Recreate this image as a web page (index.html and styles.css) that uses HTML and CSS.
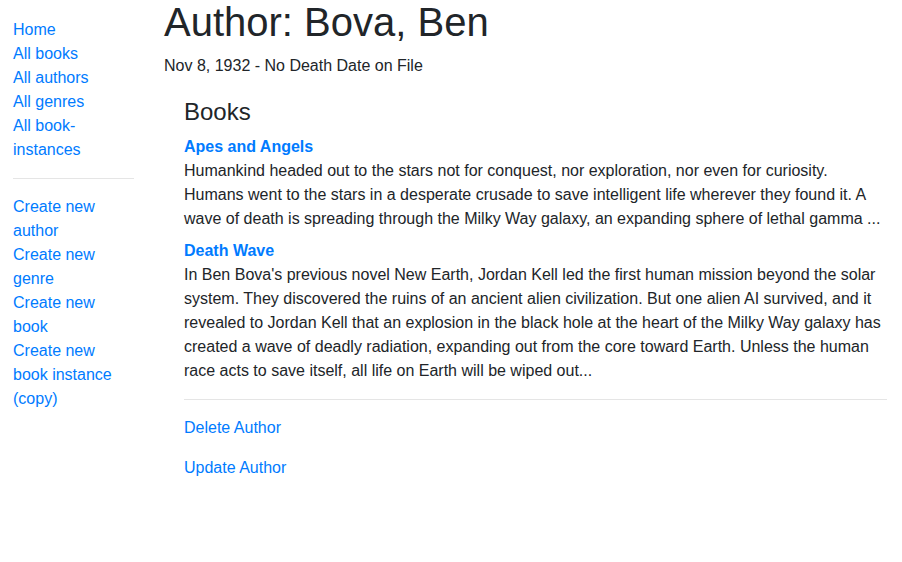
FILE: index.html
```html
<!DOCTYPE html>
<html lang="en">
<head>
<meta charset="utf-8">
<title>Author: Bova, Ben</title>
<link rel="stylesheet" href="styles.css">
</head>
<body>
<div class="page">
  <nav class="sidebar">
    <ul class="sidebar-nav">
      <li><a href="#">Home</a></li>
      <li><a href="#">All books</a></li>
      <li><a href="#">All authors</a></li>
      <li><a href="#">All genres</a></li>
      <li><a href="#">All book-instances</a></li>
      <li class="sep"><hr class="rule side-rule"></li>
      <li><a href="#">Create new author</a></li>
      <li><a href="#">Create new genre</a></li>
      <li><a href="#">Create new book</a></li>
      <li><a href="#">Create new book instance (copy)</a></li>
    </ul>
  </nav>
  <main class="content">
    <h1 class="title">Author: Bova, Ben</h1>
    <p class="dates">Nov 8, 1932 - No Death Date on File</p>
    <div class="books">
      <h4 class="books-title">Books</h4>
      <dl class="book-list">
        <dt><a href="#">Apes and Angels</a></dt>
        <dd>Humankind headed out to the stars not for conquest, nor exploration, nor even for curiosity. Humans went to the stars in a desperate crusade to save intelligent life wherever they found it. A wave of death is spreading through the Milky Way galaxy, an expanding sphere of lethal gamma ...</dd>
        <dt><a href="#">Death Wave</a></dt>
        <dd>In Ben Bova's previous novel New Earth, Jordan Kell led the first human mission beyond the solar system. They discovered the ruins of an ancient alien civilization. But one alien AI survived, and it revealed to Jordan Kell that an explosion in the black hole at the heart of the Milky Way galaxy has created a wave of deadly radiation, expanding out from the core toward Earth. Unless the human race acts to save itself, all life on Earth will be wiped out...</dd>
      </dl>
    </div>
    <div class="actions">
      <hr class="rule">
      <p><a href="#">Delete Author</a></p>
      <p><a href="#">Update Author</a></p>
    </div>
  </main>
</div>
</body>
</html>
```
FILE: styles.css
```css
html, body {
  margin: 0;
  padding: 0;
  background: #ffffff;
}

body {
  font-family: "Liberation Sans", Arial, Helvetica, sans-serif;
  font-size: 16px;
  line-height: 1.5;
  color: #212529;
}

a {
  color: #007bff;
  text-decoration: none;
}

.page {
  display: flex;
  align-items: flex-start;
}

.sidebar {
  width: 119px;
  flex: 0 0 119px;
  margin-left: 13px;
}

.sidebar-nav {
  list-style: none;
  margin: 18px 0 0;
  padding: 0;
}

.rule {
  margin: 16px 0;
  border: 0;
  border-top: 1px solid rgba(0, 0, 0, 0.1);
  height: 0;
}

.side-rule {
  margin-right: -2px;
}

.content {
  flex: 1 1 auto;
  min-width: 0;
  margin-left: 32px;
  margin-right: 15px;
}

.title {
  font-size: 40px;
  font-weight: 500;
  line-height: 1.1;
  margin: 0 0 10px;
}

.dates {
  margin: 0 0 16px;
}

.books {
  margin-left: 20px;
  margin-top: 20px;
}

.books-title {
  font-size: 24px;
  font-weight: 500;
  line-height: 1.2;
  margin: 0 0 8px;
}

.book-list {
  margin: 0 0 16px;
}

.book-list dt {
  font-weight: 700;
}

.book-list dd {
  margin: 0 0 8px;
}

.actions {
  margin-left: 20px;
}

.actions p {
  margin: 0 0 16px;
}
```
